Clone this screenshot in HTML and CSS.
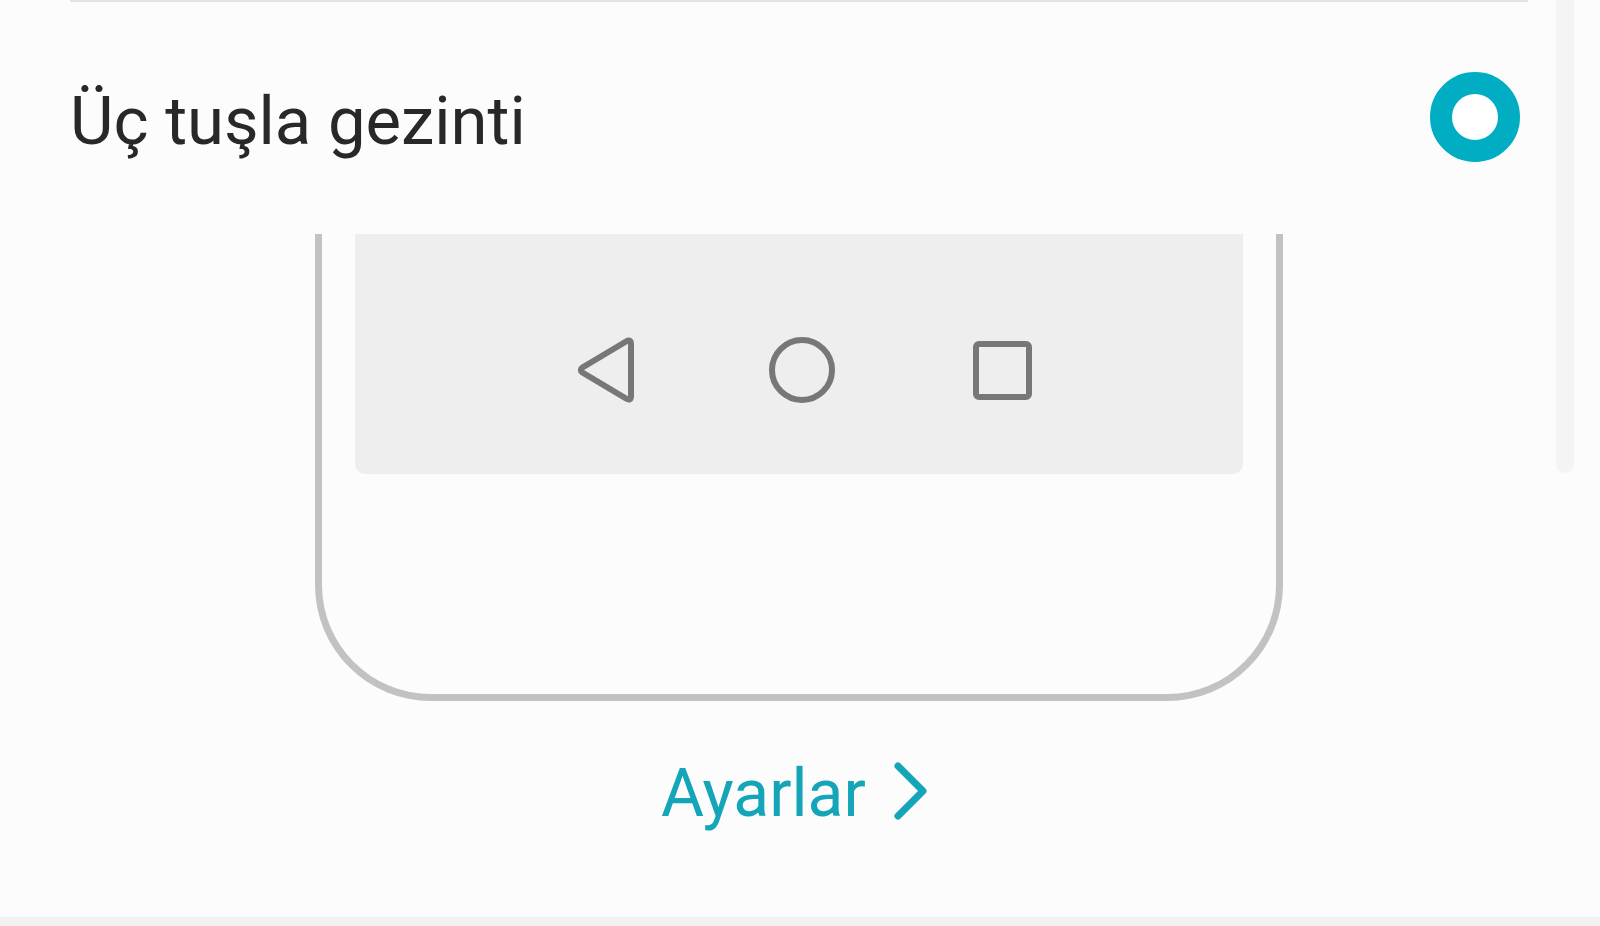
FILE: index.html
```html
<!DOCTYPE html>
<html lang="tr">

<head>
    <meta charset="UTF-8">
    <meta name="viewport" content="width=device-width, initial-scale=1.0">
    <title>Sistemde gezinme</title>

    <link rel="stylesheet" href="styles.css">
</head>

<body>
    <main class="option">
        <div class="option-row">
            <label for="three-key">Üç tuşla gezinti</label>
            <input type="radio" id="three-key" name="navigation" value="three-key" checked />
        </div>

        <!-- Phone preview -->
        <div class="phone">
            <div class="phone-screen">
                <svg class="key" viewBox="0 0 66 66" aria-hidden="true">
                    <path d="M54 4.500 Q59 1.500 59 7 V59 Q59 64.500 54 61.500 L10.500 35.500 Q7 33 10.500 30.500 Z" />
                </svg>
                <svg class="key" viewBox="0 0 66 66" aria-hidden="true">
                    <circle cx="33" cy="33" r="30" />
                </svg>
                <svg class="key" viewBox="0 0 66 66" aria-hidden="true">
                    <rect x="10" y="7" width="53" height="53" rx="3" />
                </svg>
            </div>
        </div>

        <a class="settings-link" href="#settings">
            Ayarlar
            <svg class="chevron" viewBox="0 0 36 80" aria-hidden="true">
                <path d="M5 12 L30 37 L5 62" />
            </svg>
        </a>
    </main>

    <div class="scrollbar"></div>
</body>

</html>
```
FILE: styles.css
```css
* {
    box-sizing: border-box;
}

body {
    background-color: #f2f2f2;
    font-family: Roboto, sans-serif;
    margin: 0;
    position: relative;
}

.option {
    background-color: #fcfcfc;
    padding: 0 72px 83px 70px;
    display: flex;
    flex-direction: column;
    align-items: center;
}

.option-row {
    width: 100%;
    min-height: 234px;
    padding: 70px 8px 0 0;
    border-top: 2px solid #e4e4e4;
    display: flex;
    justify-content: space-between;
    align-items: flex-start;
}

.option-row label {
    color: #282828;
    font-size: 67px;
    line-height: 98px;
}

.option-row input {
    appearance: none;
    flex: none;
    width: 90px;
    height: 90px;
    margin: 0;
    border: 22px solid #c4c4c4;
    border-radius: 50%;
    background-color: #fff;
    cursor: pointer;
}

.option-row input:checked {
    border-color: #00adc3;
}

.phone {
    width: 100%;
    max-width: 968px;
    height: 467px;
    padding: 0 33px;
    border: 7px solid #c2c2c2;
    border-top: none;
    border-radius: 0 0 116px 116px;
}

.phone-screen {
    height: 240px;
    padding: 32px 0 0 6px;
    background-color: #eee;
    border-radius: 0 0 10px 10px;
    display: flex;
    justify-content: center;
    align-items: center;
    gap: 131px;
}

.key {
    width: 66px;
    height: 66px;
    fill: none;
    stroke: #777;
    stroke-width: 6px;
}

.settings-link {
    display: flex;
    gap: 27px;
    margin-top: 53px;
    padding-right: 8px;
    color: #14a5b8;
    font-size: 66px;
    line-height: 80px;
    text-decoration: none;
}

.chevron {
    width: 36px;
    height: 80px;
    fill: none;
    stroke: currentColor;
    stroke-width: 7px;
    stroke-linecap: round;
    stroke-linejoin: round;
}

.scrollbar {
    position: absolute;
    top: 0;
    right: 26px;
    width: 18px;
    height: 473px;
    background-color: #f4f4f4;
    border-radius: 0 0 9px 9px;
}
```
